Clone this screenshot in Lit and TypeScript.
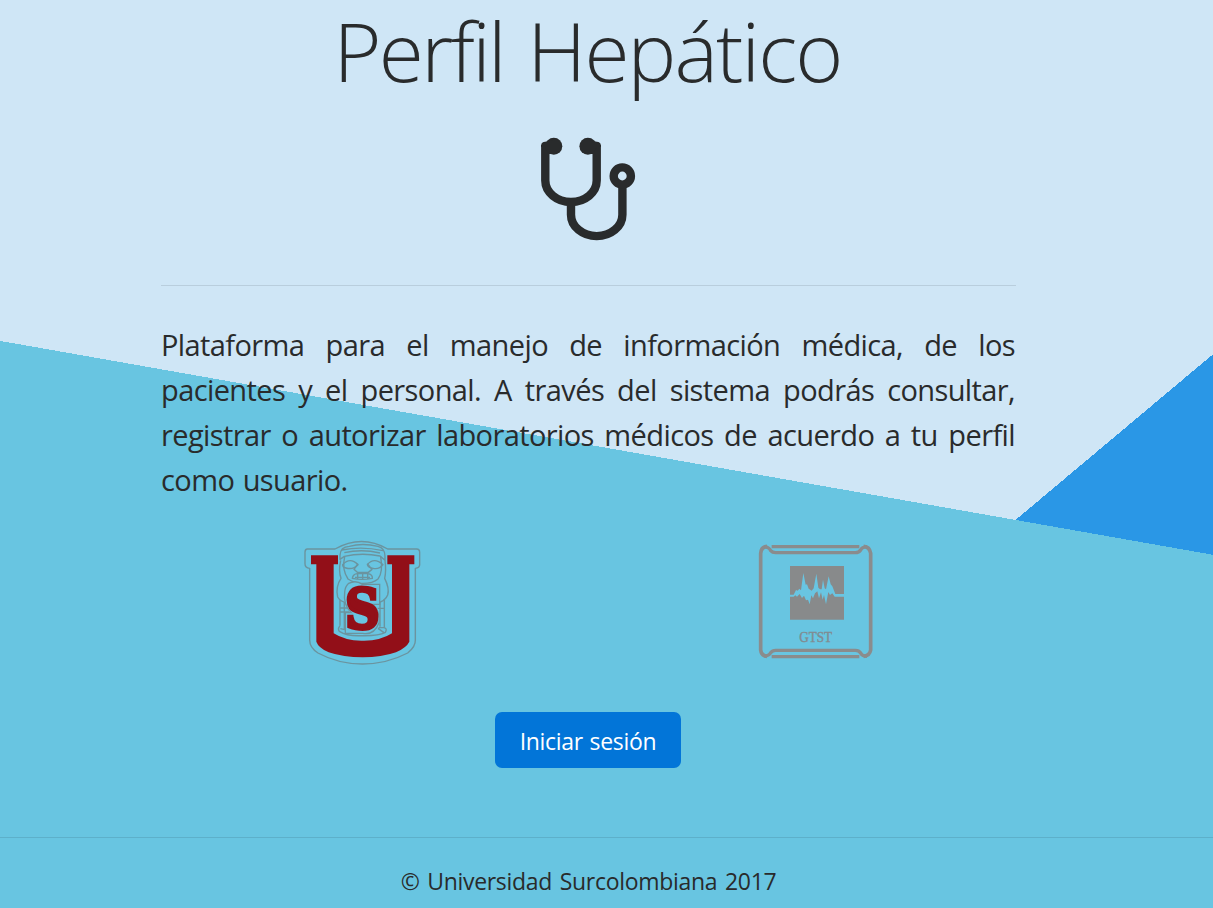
import { LitElement, html, css } from "lit";
import { customElement } from "lit/decorators.js";

@customElement("stethoscope-icon")
class StethoscopeIcon extends LitElement {
  static styles = css`
    :host { display: block; width: 96px; height: 104px; }
    .icon { display: block; }
  `;
  render() {
    return html`<svg class="icon" width="96" height="104" viewBox="0 0 96 104" fill="none" stroke="#292b2c" stroke-width="8.4">
      <path d="M4.3 8V43.6a25.7 21.4 0 0 0 51.4 0V8" />
      <path d="M30 65V77.7a25.7 21.4 0 0 0 51.4 0V50" />
      <circle cx="81.3" cy="39" r="8.6" />
      <g fill="#292b2c" stroke="none">
        <circle cx="12.8" cy="9.3" r="8.5" />
        <circle cx="46.9" cy="9.3" r="8.5" />
        <path d="M.1 10V8.4Q.4 4.8 4.2 4.8L12 3V17H8V10zM59.9 10V8.4Q59.6 4.8 55.8 4.8L48 3V17H52V10z" />
      </g>
    </svg>`;
  }
}

@customElement("usco-logo")
class UscoLogo extends LitElement {
  static styles = css`
    :host { display: block; width: 145px; height: 145px; }
    .logo { display: block; }
    .initial { font-family: "DejaVu Serif", serif; font-weight: 700; }
  `;
  render() {
    return html`<svg class="logo" width="145" height="145" viewBox="0 0 435 435">
      <g fill="none" stroke="#6b949f" stroke-width="4.2" stroke-linejoin="round">
        <path d="M52 57H135Q215 12 293 57H380Q389 57 389 67V104Q389 113 376 115V330Q377 350 353 369Q290 402 217 402Q145 402 84 369Q59 353 59 330V115Q45 113 45 102V67Q45 57 52 57z" />
        <path d="M150 76Q151 50 178 49Q217 38 264 49Q285 54 285 79V91L270 78Q216 67 163 79L150 88zM156 60Q215 48 279 62M163 68Q216 56 270 69" />
        <path d="M152 91Q145 124 153 145Q136 170 143 201Q151 216 174 219M285 91Q289 123 284 145Q299 175 293 195Q286 214 260 219" />
        <path d="M164 80Q155 119 174 147Q192 159 214 160Q248 161 264 147Q280 127 272 80" />
        <path d="M158 104Q180 80 204 104Q190 120 168 114Q158 112 158 104zM232 104Q252 80 279 104Q268 119 249 115Q235 114 232 104z" />
        <path d="M204 101L192 118L202 127H235L246 118L232 101M187 145Q189 132 202 131H233Q248 133 247 145Q215 151 187 145zM195 142H240M203 132V147M218 132V147M233 132V147" />
        <path d="M150 211V287M163 216V298M270 216V290M283 207V294M151 234H177M151 246H177M263 235H284M150 288Q142 296 148 304Q172 319 215 317Q266 318 286 307Q293 295 282 293H266M151 296Q180 303 204 306M264 295L281 307" />
      </g>
      <path fill="#69c5e2" stroke="#6b949f" stroke-width="4" d="M176 160Q198 149 216 163H269V223H248Q273 247 267 278Q253 316 218 310H166V248H184Q159 224 164 187Q165 170 176 160z" />
      <path fill="#920f18" d="M63 76H144V103H131V310Q167 333 218 332Q271 333 306 310V103H292V76H373V103H358V335Q350 352 318 367Q275 382 218 382Q160 382 116 367Q85 353 79 335V103H63z" />
      <text class="initial" x="217" y="294" text-anchor="middle" font-size="165" textLength="103" lengthAdjust="spacingAndGlyphs" fill="#920f18" stroke="#920f18" stroke-width="12">S</text>
    </svg>`;
  }
}

@customElement("gtst-logo")
class GtstLogo extends LitElement {
  static styles = css`
    :host { display: block; width: 140px; height: 140px; }
    .logo { display: block; }
    .name { font-family: "Liberation Serif", serif; }
  `;
  render() {
    return html`<svg class="logo" width="140" height="140" viewBox="0 0 420 420">
      <g fill="none" stroke="#8a8c8d" stroke-width="10">
        <path d="M80 50H343M80 380H343" />
        <path d="M66 49Q49 50 47 70V360Q49 377 66 379M356 49Q374 50 377 70V360Q374 377 356 379" stroke-width="11" />
        <path d="M58 50Q73 52 77 62Q82 68 92 68H331Q342 68 347 60Q351 51 366 50M58 379Q73 377 77 368Q82 361 92 361H331Q342 361 347 369Q351 378 366 379" />
      </g>
      <path fill="#888a8b" d="M135 108H297V269H135z" />
      <path fill="#69c5e2" d="M133 194H146L153 180L158 182L163 176L168 181L175 129L182 164L186 163L191 176L200 182L206 175L214 131L220 173L225 178L230 178L234 149L239 175L243 178L251 139L257 163L262 169L271 192H298V200H269L262 190L255 195L250 186L243 223L237 195L233 209L228 187L222 205L217 184L210 190L204 205L199 196L194 223L189 209L183 211L177 197L171 204L164 192L156 200L151 196L146 200H133z" />
      <text class="name" x="212" y="337" text-anchor="middle" font-size="43" textLength="99" lengthAdjust="spacingAndGlyphs" fill="#808c92" stroke="#808c92" stroke-width="1.2">GTST</text>
    </svg>`;
  }
}

@customElement("app-root")
class AppRoot extends LitElement {
  static styles = css`
    :host {
      display: block;
      box-sizing: border-box;
      height: 908px;
      overflow: hidden;
      color: #292b2c;
      font-family: "Open Sans", "Noto Sans", sans-serif;
      background:
        linear-gradient(10deg, #68c5e1 558.5px, transparent 558.5px),
        linear-gradient(-40deg, #2a97e6 424.2px, #cfe6f6 424.2px);
    }
    .content {
      width: 855px;
      margin-left: 161px;
      height: 837px;
      display: flex;
      flex-direction: column;
      align-items: center;
    }
    .title {
      margin: 0 2px 0 0;
      height: 137px;
      line-height: 101px;
      font-size: 82px;
      font-weight: 300;
      letter-spacing: -1.9px;
      word-spacing: 4px;
      white-space: nowrap;
    }
    .tight { letter-spacing: -2.7px; }
    .rule { align-self: stretch; height: 1px; margin-top: 44px; background: rgba(0, 0, 0, 0.1); }
    .lead {
      align-self: stretch;
      margin: 36px 0 0;
      font-size: 29px;
      line-height: 45px;
      letter-spacing: -0.6px;
    }
    .line { display: block; margin-right: 1px; white-space: nowrap; text-align: justify; text-align-last: justify; }
    .line.last { text-align-last: left; word-spacing: 1.5px; }
    .logos { align-self: stretch; display: grid; grid-template-columns: 455px 1fr; margin-top: 28px; height: 182px; padding-left: 129px; }
    .button {
      width: 186px;
      height: 56px;
      margin-right: 1px;
      padding: 0;
      border: 0;
      border-radius: 7px;
      background: #0275d8;
      color: #fff;
      font: 400 23px/58px "Open Sans", "Noto Sans", sans-serif;
      letter-spacing: -0.3px;
      word-spacing: 1px;
    }
    .footer {
      border-top: 1px solid rgba(0, 0, 0, 0.1);
      padding: 25px 36px 0 0;
      text-align: center;
      font-size: 23px;
      line-height: 36px;
      letter-spacing: -0.3px;
      word-spacing: 2px;
    }
  `;
  render() {
    return html`
      <main class="content">
        <h1 class="title"><span class="tight">Perfil</span> Hepático</h1>
        <stethoscope-icon></stethoscope-icon>
        <div class="rule"></div>
        <p class="lead">
          <span class="line">Plataforma para el manejo de información médica, de los</span>
          <span class="line">pacientes y el personal. A través del sistema podrás consultar,</span>
          <span class="line">registrar o autorizar laboratorios médicos de acuerdo a tu perfil</span>
          <span class="line last">como usuario.</span>
        </p>
        <div class="logos"><usco-logo></usco-logo><gtst-logo></gtst-logo></div>
        <button class="button">Iniciar sesión</button>
      </main>
      <footer class="footer">© Universidad Surcolombiana 2017</footer>
    `;
  }
}
